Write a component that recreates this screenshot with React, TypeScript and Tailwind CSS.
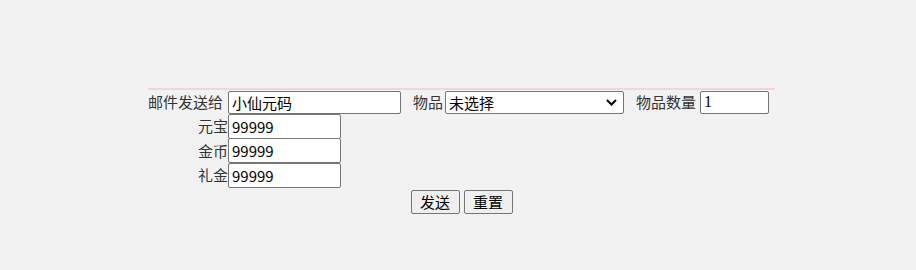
import { useState } from "react";

const font = "font-['Microsoft_YaHei','Noto_Sans_CJK_SC',sans-serif]";

function Field({ label, value }: { label: string; value: string }) {
  const [v, setV] = useState(value);
  return (
    <div className="flex items-center h-[24.5px]">
      <span className="w-[80px] text-right leading-[24px]">{label}</span>
      <input
        value={v}
        onChange={(e) => setV(e.target.value)}
        className="w-[113px] h-[25px] bg-white border border-[#767676] rounded-[2px] px-[3px] text-[15px] text-black outline-none"
      />
    </div>
  );
}

export default function App() {
  const [to, setTo] = useState("小仙元码");
  const [item, setItem] = useState("none");
  const [count, setCount] = useState("1");

  return (
    <div className={`min-h-[270px] bg-[#f2f2f2] pt-[88px] text-[15px] text-[#333] ${font}`}>
      <div className="ml-[148px] w-[627px] border-t-2 border-[#f5d3da]">
        {/* 第一行 */}
        <div className="flex items-center h-[24px]">
          <span className="w-[80px] pr-[5px] text-right leading-[24px]">邮件发送给</span>
          <input
            value={to}
            onChange={(e) => setTo(e.target.value)}
            className="w-[173px] h-[23px] bg-white border border-[#767676] rounded-[2px] px-[3px] text-[15px] text-black outline-none"
          />
          <span className="ml-[12px] mr-[2px] leading-[24px]">物品</span>
          <div className="relative w-[179px] h-[23px]">
            <select
              value={item}
              onChange={(e) => setItem(e.target.value)}
              className="appearance-none w-full h-full bg-white border border-[#767676] rounded-[2px] pl-[3px] text-[15px] text-black outline-none"
            >
              <option value="none">未选择</option>
              <option value="a">元宝礼包</option>
              <option value="b">金币礼包</option>
            </select>
            <svg
              className="pointer-events-none absolute right-[7px] top-[8px]"
              width="11"
              height="7"
              viewBox="0 0 11 7"
            >
              <path d="M1 1l4.5 4.5L10 1" fill="none" stroke="#000" strokeWidth="2" />
            </svg>
          </div>
          <span className="ml-[12px] mr-[4px] leading-[24px]">物品数量</span>
          <input
            value={count}
            onChange={(e) => setCount(e.target.value)}
            className="w-[69px] h-[23px] bg-white border border-[#767676] rounded-[2px] px-[3px] font-['Liberation_Serif',serif] text-[16px] text-black outline-none"
          />
        </div>

        {/* 货币 */}
        <Field label="元宝" value="99999" />
        <Field label="金币" value="99999" />
        <Field label="礼金" value="99999" />

        {/* 按钮 */}
        <div className="flex justify-center gap-[4px] mt-[2px]">
          <button className="w-[49px] h-[24px] bg-[#efefef] border border-[#767676] rounded-[2px] text-[15px] text-black leading-none">
            发送
          </button>
          <button className="w-[49px] h-[24px] bg-[#efefef] border border-[#767676] rounded-[2px] text-[15px] text-black leading-none">
            重置
          </button>
        </div>
      </div>
    </div>
  );
}
